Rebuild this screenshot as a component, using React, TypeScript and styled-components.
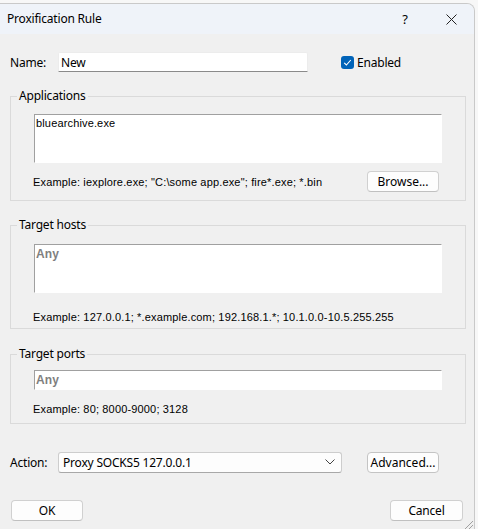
import React from 'react'
import styled, { createGlobalStyle } from 'styled-components'

const GlobalStyle = createGlobalStyle`
    html, body {
        margin: 0;
        padding: 0;
        background: #f7f7f7;
    }
    body {
        font-family: "Noto Sans", "Liberation Sans", sans-serif;
        font-size: 12px;
        color: #000;
    }
`

const ui = `"Noto Sans", "Liberation Sans", sans-serif`
const classic = `"Liberation Sans", Arial, sans-serif`

const Screen = styled.div`
    height: 529px;
    padding-top: 3px;
    box-sizing: border-box;
    overflow: hidden;
`

const Window = styled.div`
    position: relative;
    width: 475px;
    height: 540px;
    box-sizing: border-box;
    border: 1px solid #c9c9c9;
    border-left: none;
    border-radius: 0 8px 0 0;
    background: #f0f0f0;
    overflow: hidden;
`

const TitleBar = styled.div`
    height: 30px;
    display: flex;
    align-items: center;
    background: #eff3f9;
    padding-left: 7px;
`

const Title = styled.span`
    flex: 1;
    font-family: ${ui};
    font-size: 12px;
    letter-spacing: -0.2px;
    padding-bottom: 1px;
`

const TitleButton = styled.div`
    width: 46px;
    height: 30px;
    display: flex;
    align-items: center;
    justify-content: center;
    font-family: ${ui};
    font-size: 13px;
`

const Body = styled.div`
    padding: 18px 9px 0 10px;
    display: flex;
    flex-direction: column;
`

const Row = styled.div<{ $top?: number }>`
    display: flex;
    align-items: center;
    height: 20px;
    margin-top: ${p => p.$top || 0}px;
`

const Label = styled.span`
    width: 48px;
    font-family: ${ui};
    font-size: 12px;
    letter-spacing: -0.2px;
`

const NameInput = styled.div`
    width: 250px;
    height: 20px;
    box-sizing: border-box;
    background: #fff;
    border: 1px solid #ececec;
    border-bottom: 1px solid #8a8a8a;
    border-radius: 2px 2px 0 0;
    font-family: ${ui};
    font-size: 12px;
    letter-spacing: -0.2px;
    padding-left: 2px;
    display: flex;
    align-items: center;
`

const Check = styled.div`
    margin-left: 33px;
    display: flex;
    align-items: center;
    gap: 3px;
    font-family: ${ui};
    font-size: 12px;
    letter-spacing: -0.2px;
`

const Box = styled.div`
    width: 13px;
    height: 13px;
    border-radius: 3px;
    background: #0063b8;
    display: flex;
    align-items: center;
    justify-content: center;
`

const Group = styled.fieldset<{ $top: number; $pad: number; $bottom: number }>`
    margin: ${p => p.$top}px 0 0 0;
    width: 456px;
    box-sizing: border-box;
    border: 1px solid #dadada;
    padding: ${p => p.$pad}px 23px ${p => p.$bottom}px 23px;
    min-width: 0;
`

const Legend = styled.legend`
    font-family: ${ui};
    font-size: 12px;
    letter-spacing: -0.2px;
    line-height: 16px;
    padding: 0 2px;
    margin-left: -17px;
`

const Field = styled.div<{ $h: number }>`
    height: ${p => p.$h}px;
    box-sizing: border-box;
    background: #fff;
    border-top: 1px solid #a0a0a0;
    border-left: 1px solid #a0a0a0;
    border-right: 1px solid #fff;
    border-bottom: 1px solid #fff;
    padding: 2px 1px;
    font-family: ${classic};
    font-size: 11px;
    letter-spacing: 0.15px;
`

const Placeholder = styled.span`
    font-weight: bold;
    font-size: 12px;
    color: #7f7f7f;
`

const Hint = styled.div<{ $top: number }>`
    margin-top: ${p => p.$top}px;
    margin-left: -1px;
    display: flex;
    align-items: center;
    justify-content: space-between;
    min-height: 14px;
    font-family: ${classic};
    font-size: 11px;
    letter-spacing: 0.16px;
`

const Button = styled.div<{ $w?: number }>`
    width: ${p => p.$w || 72}px;
    height: 21px;
    box-sizing: border-box;
    border: 1px solid #d0d0d0;
    border-bottom-color: #c0c0c0;
    border-radius: 4px;
    background: #fdfdfd;
    display: flex;
    align-items: center;
    justify-content: center;
    font-family: ${ui};
    font-size: 12px;
    letter-spacing: -0.2px;
`

const Browse = styled(Button)`
    margin-right: 3px;
    letter-spacing: 0;
`

const Combo = styled.div`
    width: 284px;
    height: 21px;
    box-sizing: border-box;
    border: 1px solid #cdcdcd;
    border-bottom-color: #a8a8a8;
    border-radius: 3px;
    background: #fdfdfd;
    display: flex;
    align-items: center;
    padding: 0 6px 0 4px;
    font-family: ${ui};
    font-size: 12px;
    letter-spacing: -0.2px;
`

const ComboText = styled.span`
    flex: 1;
`

const Footer = styled.div`
    display: flex;
    justify-content: space-between;
    margin-top: 28px;
    padding: 0 2px 0 1px;
`

const Grip = styled.svg`
    position: absolute;
    right: 0;
    top: 514px;
`

const Advanced = styled(Button)`
    margin-left: 25px;
    border-color: #c4c4c4;
    letter-spacing: 0;
`

export default function App() {
    return (
        <>
            <GlobalStyle />
            <Screen>
                <Window>
                    <TitleBar>
                        <Title>Proxification Rule</Title>
                        <TitleButton>?</TitleButton>
                        <TitleButton>
                            <svg width="11" height="11" viewBox="0 0 11 11">
                                <path d="M0.5 0.5 L10.5 10.5 M10.5 0.5 L0.5 10.5" stroke="#222" strokeWidth="1" />
                            </svg>
                        </TitleButton>
                    </TitleBar>
                    <Body>
                        <Row $top={0}>
                            <Label>Name:</Label>
                            <NameInput>New</NameInput>
                            <Check>
                                <Box>
                                    <svg width="9" height="9" viewBox="0 0 9 9">
                                        <path d="M1.2 4.8 L3.4 7 L7.8 2" fill="none" stroke="#fff" strokeWidth="1.1" />
                                    </svg>
                                </Box>
                                Enabled
                            </Check>
                        </Row>

                        <Group $top={16} $pad={10} $bottom={8}>
                            <Legend>Applications</Legend>
                            <Field $h={49}>bluearchive.exe</Field>
                            <Hint $top={8}>
                                <span>Example: iexplore.exe; "C:\some app.exe"; fire*.exe; *.bin</span>
                                <Browse>Browse...</Browse>
                            </Hint>
                        </Group>

                        <Group $top={16} $pad={11} $bottom={4}>
                            <Legend>Target hosts</Legend>
                            <Field $h={49}><Placeholder>Any</Placeholder></Field>
                            <Hint $top={17}>
                                <span>Example: 127.0.0.1; *.example.com; 192.168.1.*; 10.1.0.0-10.5.255.255</span>
                            </Hint>
                        </Group>

                        <Group $top={17} $pad={8} $bottom={7}>
                            <Legend>Target ports</Legend>
                            <Field $h={20}><Placeholder>Any</Placeholder></Field>
                            <Hint $top={12}>
                                <span>Example: 80; 8000-9000; 3128</span>
                            </Hint>
                        </Group>

                        <Row $top={28}>
                            <Label>Action:</Label>
                            <Combo>
                                <ComboText>Proxy SOCKS5 127.0.0.1</ComboText>
                                <svg width="10" height="6" viewBox="0 0 10 6">
                                    <path d="M0.5 0.5 L5 5 L9.5 0.5" fill="none" stroke="#444" strokeWidth="1" />
                                </svg>
                            </Combo>
                            <Advanced>Advanced...</Advanced>
                        </Row>

                        <Footer>
                            <Button>OK</Button>
                            <Button $w={73}>Cancel</Button>
                        </Footer>
                    </Body>
                    <Grip width="12" height="12" viewBox="0 0 12 12">
                        <path d="M11 3 L3 11 M11 7 L7 11" stroke="#a0a0a0" strokeWidth="1" />
                    </Grip>
                </Window>
            </Screen>
        </>
    )
}
